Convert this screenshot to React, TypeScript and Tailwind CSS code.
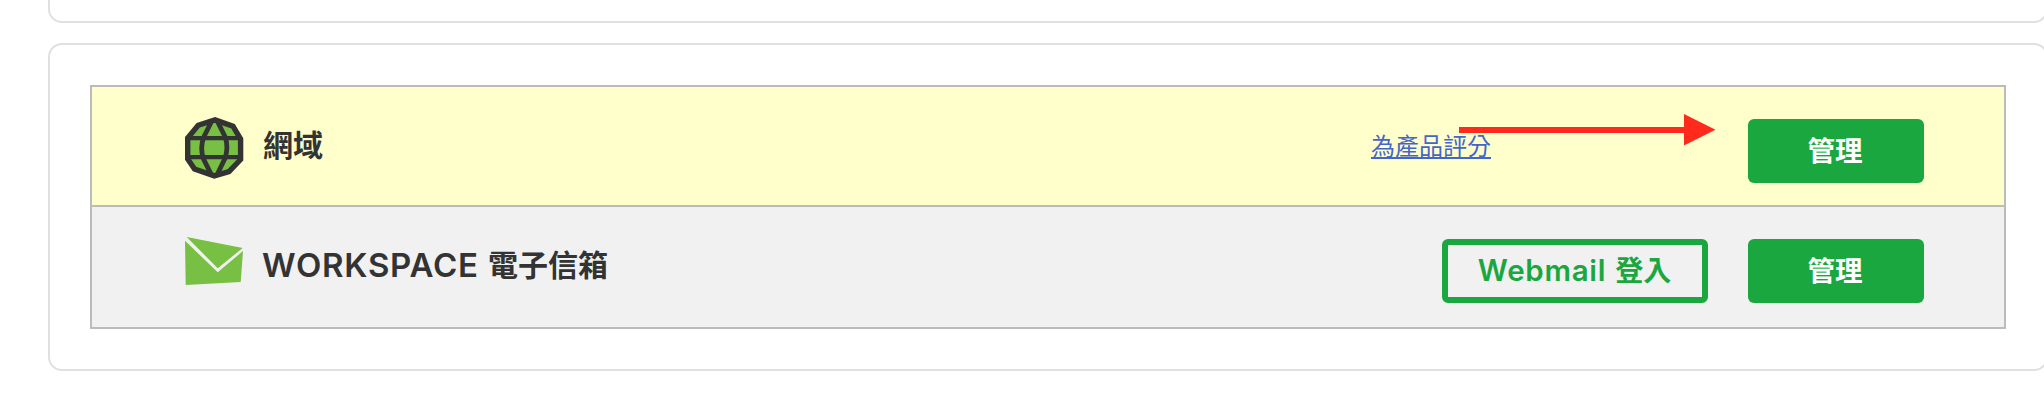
import React from "react";

function GlobeIcon() {
  return (
    <svg width="60" height="64" viewBox="0 0 60 64" className="block shrink-0" fill="none" stroke="#333333">
      <path
        d="M31 3.900 49 10.200 56.600 23V43.500L45 55.600 30.300 59.900 10.500 53 3.700 43V22L14.200 9.300Z"
        fill="#77c043"
        strokeWidth="5.4"
      />
      <path d="M4 22.200H56M4 41.200H56" strokeWidth="4.2" />
      <path
        d="M28 4.500 19.600 21.500Q16 31.700 19.200 42.300L28 60M33 4.500 41.400 21.500Q44.600 31.700 41 42.300L32.500 60"
        strokeWidth="4.8"
      />
    </svg>
  );
}

function EnvelopeIcon() {
  return (
    <svg width="60" height="50" viewBox="0 0 60 50" className="block shrink-0" fill="#77c043">
      <path d="M2.700 1 58.700 12 33.700 32.300Z" />
      <path d="M1 4.700 33.700 36.300 59 15 56.700 46 1.700 49Z" />
    </svg>
  );
}

function Arrow() {
  return (
    <svg width="257" height="32" viewBox="0 0 257 32" className="absolute left-[88px] -top-[14px]" fill="#ff2a1c">
      <path d="M0 13H225V0L256.500 15.800 225 31.500V19H0Z" />
    </svg>
  );
}

function ManageButton() {
  return (
    <button className="flex h-16 w-44 items-center justify-center rounded-md bg-[#1aa73f] pt-0.5 pr-0.5 text-[27.5px] leading-none font-bold text-white">
      管理
    </button>
  );
}

export default function App() {
  return (
    <div
      lang="zh-Hant"
      className="h-[403px] w-full overflow-hidden bg-white pl-12 font-['Inter','Noto_Sans_CJK_TC',sans-serif] text-[#333333]"
    >
      <div className="h-[23px] w-[2000px] rounded-b-[14px] border-2 border-t-0 border-[#e0e0e0]" />
      <div className="mt-5 h-[328px] w-[2000px] rounded-[14px] border-2 border-[#e0e0e0] p-10">
        <div className="h-[244px] w-[1916px] border-2 border-[#bbbbbb]">
          <div className="flex h-[120px] items-start border-b-2 border-[#bbbbbb] bg-[#ffffcc] pl-[92px] pr-20">
            <div className="pt-[29px]">
              <GlobeIcon />
            </div>
            <h2 className="ml-[19px] pt-9 text-[30px] leading-[44px] font-bold">網域</h2>
            <div className="relative mt-[41px] ml-auto mr-[257px]">
              <a
                href="#"
                className="block h-[31px] border-b-2 border-[#4466cc] text-[24px] leading-[37px] font-normal text-[#4466cc]"
              >
                為產品評分
              </a>
              <Arrow />
            </div>
            <div className="pt-8">
              <ManageButton />
            </div>
          </div>
          <div className="flex h-[120px] items-start bg-[#f1f1f1] pl-[92px] pr-20">
            <div className="pt-[29px]">
              <EnvelopeIcon />
            </div>
            <h2 className="ml-[18px] flex gap-[10px] pt-9 leading-[44px]">
              <span className="w-[216px] text-[33px] font-semibold tracking-[0.75px]">WORKSPACE</span>
              <span className="text-[30px] font-bold">電子信箱</span>
            </h2>
            <div className="ml-auto flex gap-10 pt-8">
              <button className="flex h-16 w-[266px] items-center justify-center gap-[9px] rounded-md border-6 border-[#1aa73f] pr-px leading-none text-[#1aa73f]">
                <span className="text-[29.5px] font-semibold tracking-[0.7px]">Webmail</span>
                <span className="text-[28px] font-bold">登入</span>
              </button>
              <ManageButton />
            </div>
          </div>
        </div>
      </div>
    </div>
  );
}
